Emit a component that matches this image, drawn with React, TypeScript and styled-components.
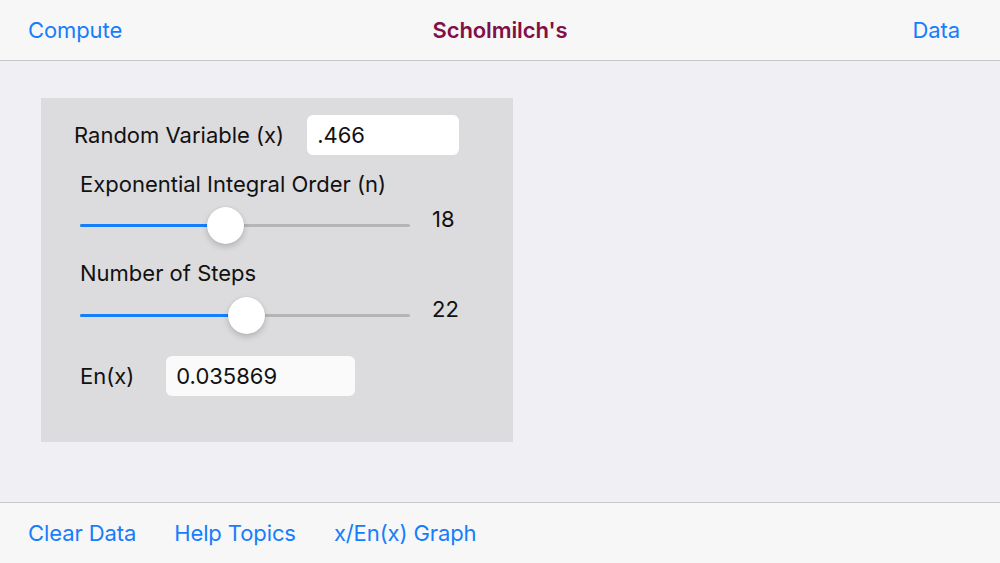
import React from "react";
import styled, { createGlobalStyle } from "styled-components";

const Global = createGlobalStyle`
  html, body { margin: 0; padding: 0; }
  body { font-family: Inter, "Liberation Sans", Arial, sans-serif; background: #efeff4; }
`;

const Page = styled.div`
  width: 1000px;
  height: 563px;
  display: flex;
  flex-direction: column;
  background: #efeff4;
  overflow: hidden;
`;

const NavBar = styled.header`
  height: 60px;
  flex: 0 0 60px;
  display: flex;
  align-items: center;
  justify-content: space-between;
  padding: 0 40px 0 28px;
  background: #f7f7f7;
  border-bottom: 1px solid #c6c6c9;
  position: relative;
`;

const NavButton = styled.span`
  color: #157efb;
  font-size: 22px;
  letter-spacing: -0.1px;
`;

const Title = styled.span`
  position: absolute;
  left: 0;
  right: 0;
  text-align: center;
  color: #820f48;
  font-size: 22px;
  font-weight: 600;
  letter-spacing: -0.1px;
  pointer-events: none;
`;

const Main = styled.main`
  flex: 1;
  padding: 37px 0 0 41px;
`;

const Panel = styled.section`
  width: 472px;
  height: 344px;
  box-sizing: border-box;
  background: #dcdcde;
  padding: 17px 0 0 0;
  display: flex;
  flex-direction: column;
`;

const Row = styled.div<{ $left: number; $gap: number; $top?: number }>`
  display: flex;
  align-items: center;
  height: 40px;
  padding-left: ${(p) => p.$left}px;
  gap: ${(p) => p.$gap}px;
  margin-top: ${(p) => p.$top ?? 0}px;
`;

const Label = styled.span`
  font-size: 22px;
  color: #111;
  white-space: nowrap;
`;

const SectionLabel = styled.div<{ $top: number }>`
  font-size: 22px;
  color: #111;
  padding-left: 39px;
  height: 26px;
  line-height: 26px;
  margin-top: ${(p) => p.$top}px;
`;

const Field = styled.div<{ $w: number; $bg: string }>`
  width: ${(p) => p.$w}px;
  height: 40px;
  box-sizing: border-box;
  border-radius: 6px;
  background: ${(p) => p.$bg};
  padding-left: 10px;
  display: flex;
  align-items: center;
  font-size: 22px;
  color: #111;
`;

const SliderRow = styled.div<{ $top: number }>`
  display: flex;
  align-items: center;
  height: 40px;
  padding-left: 39px;
  margin-top: ${(p) => p.$top}px;
  gap: 22px;
`;

const Track = styled.div`
  position: relative;
  width: 330px;
  height: 3px;
  border-radius: 2px;
  background: #b5b5b7;
`;

const Fill = styled.div`
  position: absolute;
  left: 0;
  top: 0;
  height: 3px;
  border-radius: 2px;
  background: #157efb;
`;

const Thumb = styled.div`
  position: absolute;
  top: 50%;
  width: 37px;
  height: 37px;
  margin-left: -18.5px;
  margin-top: -18.5px;
  border-radius: 50%;
  background: #fff;
  box-shadow: 0 3px 6px rgba(0, 0, 0, 0.18), 0 0 1px rgba(0, 0, 0, 0.2);
`;

const SliderValue = styled.span`
  font-size: 22px;
  color: #111;
  margin-top: -13px;
`;

const ToolBar = styled.footer`
  height: 60px;
  flex: 0 0 60px;
  display: flex;
  align-items: center;
  gap: 38px;
  padding-left: 28px;
  background: #f7f7f7;
  border-top: 1px solid #c6c6c9;
`;

const ToolButton = styled.span`
  color: #157efb;
  font-size: 22px;
  letter-spacing: -0.1px;
`;

function Slider({ fraction, value, top }: { fraction: number; value: string; top: number }) {
  const px = Math.round(fraction * 330);
  return (
    <SliderRow $top={top}>
      <Track>
        <Fill style={{ width: px }} />
        <Thumb style={{ left: px }} />
      </Track>
      <SliderValue>{value}</SliderValue>
    </SliderRow>
  );
}

export default function App() {
  return (
    <>
      <Global />
      <Page>
        <NavBar>
          <NavButton>Compute</NavButton>
          <Title>Scholmilch's</Title>
          <NavButton>Data</NavButton>
        </NavBar>
        <Main>
          <Panel>
            <Row $left={33} $gap={23}>
              <Label>Random Variable (x)</Label>
              <Field $w={152} $bg="#ffffff">.466</Field>
            </Row>
            <SectionLabel $top={16}>Exponential Integral Order (n)</SectionLabel>
            <Slider fraction={0.439} value="18" top={8} />
            <SectionLabel $top={15}>Number of Steps</SectionLabel>
            <Slider fraction={0.503} value="22" top={9} />
            <Row $left={39} $gap={32} $top={21}>
              <Label>En(x)</Label>
              <Field $w={189} $bg="#fafafa">0.035869</Field>
            </Row>
          </Panel>
        </Main>
        <ToolBar>
          <ToolButton>Clear Data</ToolButton>
          <ToolButton>Help Topics</ToolButton>
          <ToolButton>x/En(x) Graph</ToolButton>
        </ToolBar>
      </Page>
    </>
  );
}
